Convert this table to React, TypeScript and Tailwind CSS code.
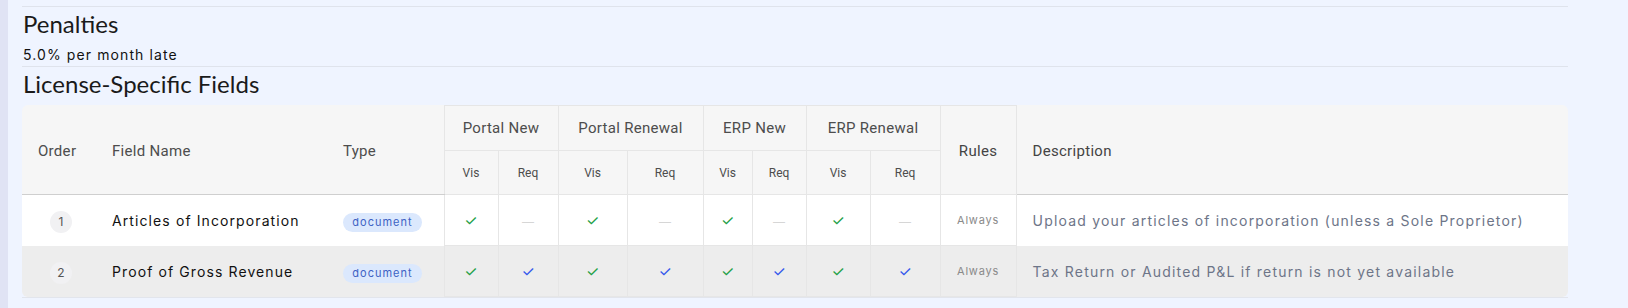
import React from 'react';

interface Flags {
  vis: boolean;
  req: boolean;
}

interface FieldRow {
  order: number;
  name: string;
  type: string;
  portalNew: Flags;
  portalRenewal: Flags;
  erpNew: Flags;
  erpRenewal: Flags;
  rules: string;
  description: string;
}

const rows: FieldRow[] = [
  {
    order: 1,
    name: 'Articles of Incorporation',
    type: 'document',
    portalNew: { vis: true, req: false },
    portalRenewal: { vis: true, req: false },
    erpNew: { vis: true, req: false },
    erpRenewal: { vis: true, req: false },
    rules: 'Always',
    description: 'Upload your articles of incorporation (unless a Sole Proprietor)',
  },
  {
    order: 2,
    name: 'Proof of Gross Revenue',
    type: 'document',
    portalNew: { vis: true, req: true },
    portalRenewal: { vis: true, req: true },
    erpNew: { vis: true, req: true },
    erpRenewal: { vis: true, req: true },
    rules: 'Always',
    description: 'Tax Return or Audited P&L if return is not yet available',
  },
];

const groups = ['Portal New', 'Portal Renewal', 'ERP New', 'ERP Renewal'];

const body = "font-['Inter',sans-serif]";
const head = "font-['Roboto',sans-serif]";

const Mark: React.FC<{ on: boolean; color: string }> = ({ on, color }) =>
  on ? (
    <span className={`${color} text-[15px]`}>✓</span>
  ) : (
    <span className="text-[#d6d6d6] text-[12px]">—</span>
  );

const FlagCells: React.FC<{ f: Flags }> = ({ f }) => (
  <>
    <td className="border border-[#e6e6e6] text-center">
      <Mark on={f.vis} color="text-[#23a047]" />
    </td>
    <td className="border border-[#e6e6e6] text-center">
      <Mark on={f.req} color="text-[#3458ec]" />
    </td>
  </>
);

export default function App() {
  return (
    <div className="flex w-[1628px] h-[308px] bg-[#eff4ff] overflow-hidden">
      <div className="w-[8px] bg-[#e0e3f4]" />
      <div className="flex-1 pl-[14px] pr-[60px] pt-[6px]">
        {/* Penalties */}
        <section className="border-t border-[#dfe3ec] pt-[3px] pb-[1px]">
          <h3 className="font-['Lato',sans-serif] text-[24px] leading-[28px] text-[#1a1a1a] pl-[1px]">Penalties</h3>
          <p className={`${body} text-[14px] leading-[20px] font-normal tracking-[1.1px] text-[#111] mt-[7px] pl-[1px]`}>
            5.0% per month late
          </p>
        </section>

        {/* License-specific fields */}
        <section className="border-t border-[#dfe3ec] pt-[3px]">
          <h3 className="font-['Lato',sans-serif] text-[24px] leading-[28px] text-[#1a1a1a] pl-[1px]">License-Specific Fields</h3>
          <div className="mt-[7px] border-b border-[#e2e5ec]">
            <div className="rounded-md overflow-hidden bg-[#f6f6f6]">
              <table className="w-full table-fixed border-collapse">
                <colgroup>
                  <col className="w-[78px]" />
                  <col className="w-[231px]" />
                  <col className="w-[113px]" />
                  <col className="w-[54px]" />
                  <col className="w-[60px]" />
                  <col className="w-[69px]" />
                  <col className="w-[76px]" />
                  <col className="w-[49px]" />
                  <col className="w-[54px]" />
                  <col className="w-[64px]" />
                  <col className="w-[70px]" />
                  <col className="w-[76px]" />
                  <col />
                </colgroup>
                <thead className={`${head} text-[#4d4d4d]`}>
                  <tr className="h-[45px]">
                    <th rowSpan={2} className="pl-4 pt-[2px] text-left font-normal text-[15px] tracking-[0.3px] border-b border-[#cfcfcf]">Order</th>
                    <th rowSpan={2} className="pl-3 pt-[2px] text-left font-normal text-[15px] tracking-[0.3px] border-b border-[#cfcfcf]">Field Name</th>
                    <th rowSpan={2} className="pl-3 pt-[2px] text-left font-normal text-[15px] tracking-[0.3px] border-b border-[#cfcfcf]">Type</th>
                    {groups.map((g) => (
                      <th key={g} colSpan={2} className="font-normal text-[15px] tracking-[0.3px] border border-[#e6e6e6]">
                        {g}
                      </th>
                    ))}
                    <th rowSpan={2} className="pt-[2px] font-normal text-[15px] tracking-[0.3px] text-[#444] border border-[#e6e6e6]">Rules</th>
                    <th rowSpan={2} className="pl-4 pt-[2px] text-left font-normal text-[15px] tracking-[0.3px] text-[#444] border-b border-[#cfcfcf]">Description</th>
                  </tr>
                  <tr className="h-[44px]">
                    {groups.map((g) => (
                      <React.Fragment key={g}>
                        <th className="font-normal text-[12px] border border-[#e6e6e6]">Vis</th>
                        <th className="font-normal text-[12px] border border-[#e6e6e6]">Req</th>
                      </React.Fragment>
                    ))}
                  </tr>
                </thead>
                <tbody className={body}>
                  {rows.map((r, i) => (
                    <tr key={r.order} className={`h-[51px] ${i % 2 === 0 ? 'bg-white' : 'bg-[#ededed]'}`}>
                      <td className="text-center">
                        <span className="inline-flex w-[22px] h-[22px] items-center justify-center rounded-full bg-[#f1f1f3] text-[12px] text-[#555]">
                          {r.order}
                        </span>
                      </td>
                      <td className="pl-3 text-[14px] font-normal tracking-[1.1px] text-[#111]">{r.name}</td>
                      <td className="pl-3">
                        <span className="inline-flex w-[79px] h-[19px] items-center justify-center rounded-full bg-[#dbe8fd] text-[11px] tracking-[1px] text-[#3d62c4]">
                          {r.type}
                        </span>
                      </td>
                      <FlagCells f={r.portalNew} />
                      <FlagCells f={r.portalRenewal} />
                      <FlagCells f={r.erpNew} />
                      <FlagCells f={r.erpRenewal} />
                      <td className="border border-[#e6e6e6] text-center text-[11px] tracking-[0.8px] text-[#8a8a8a]">{r.rules}</td>
                      <td className="pl-4 text-[14px] tracking-[1.2px] text-[#6d7588]">{r.description}</td>
                    </tr>
                  ))}
                </tbody>
              </table>
            </div>
          </div>
        </section>
      </div>
    </div>
  );
}
